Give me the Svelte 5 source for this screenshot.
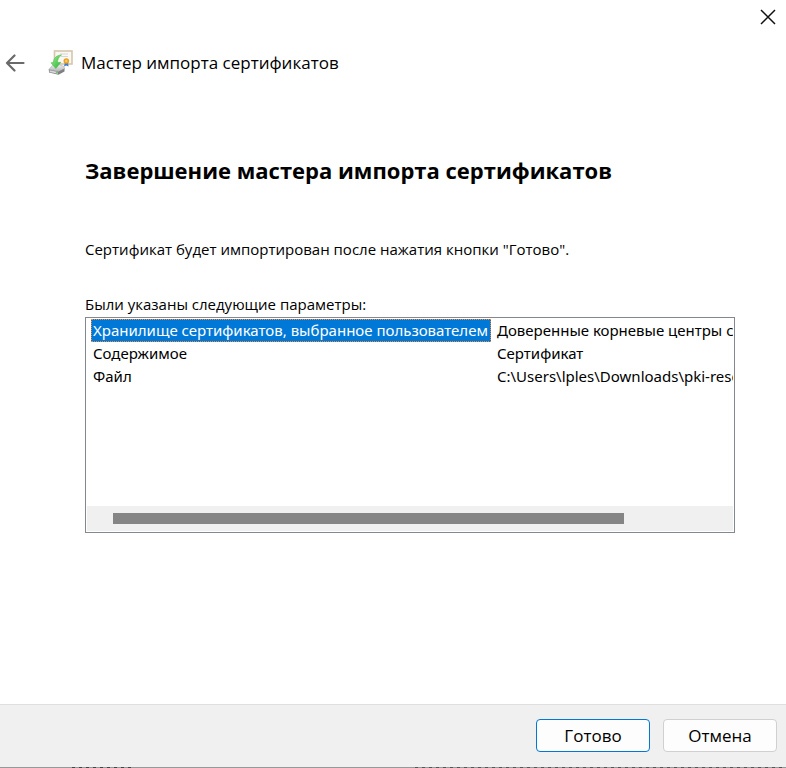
<script>
  const rows = [
    ['Хранилище сертификатов, выбранное пользователем', 'Доверенные корневые центры сертификации'],
    ['Содержимое', 'Сертификат'],
    ['Файл', 'C:\\Users\\lples\\Downloads\\pki-resources.cer'],
  ];
  let selected = $state(0);
</script>

<div class="wizard">
  <div class="titlebar">
    <button class="close" aria-label="Закрыть">
      <svg width="16" height="16" viewBox="0 0 16 16"><path d="M1 1L15 15M15 1L1 15" stroke="#111" stroke-width="1.5" fill="none" /></svg>
    </button>
  </div>

  <header>
    <button class="back" aria-label="Назад">
      <svg width="20" height="18" viewBox="0 0 20 18"><path d="M18.500 9H2M9.500 1.500L2 9L9.500 16.500" stroke="#6a6a6a" stroke-width="2.200" fill="none" stroke-linecap="round" stroke-linejoin="round" /></svg>
    </button>
    <svg class="logo" width="26" height="26" viewBox="0 0 26 26" aria-hidden="true">
      <defs>
        <linearGradient id="arrow" x1="0" y1="0" x2="1" y2="1"><stop offset="0" stop-color="#a2ee96" /><stop offset="1" stop-color="#22b52d" /></linearGradient>
        <linearGradient id="drive" x1="0" y1="0" x2="0" y2="1"><stop offset="0" stop-color="#f0f0f0" /><stop offset="1" stop-color="#b4b4b8" /></linearGradient>
      </defs>
      <rect x="6.500" y="1" width="17.500" height="13" fill="#faf8f3" stroke="#d5c6ad" stroke-width="1.600" />
      <path d="M12 4h8M13 6.500h7" stroke="#d4d6dc" stroke-width="1" />
      <path d="M17 12l-1 4.500 2.300-1 2.200 1-.5-4.500z" fill="#3d7ccb" />
      <circle cx="18.300" cy="11" r="2.800" fill="#eda020" />
      <circle cx="18.300" cy="11" r="1.200" fill="#ffcd60" />
      <path d="M.8 19.500L4.500 15.500 11 14.500l5 2 .5 2.500-5 2.500z" fill="url(#drive)" stroke="#aaa" stroke-width=".6" />
      <path d="M.8 19.500l9.700 2 6-3v3l-6 3.300L1 22.500z" fill="#808083" />
      <path d="M1.600 20.300l8.400 1.700v1.800L1.600 22z" fill="#d9d9dc" />
      <path d="M13.500 5C8.500 5.300 5.500 8 5.500 12.500L3 12.800 7.800 18.500l5-6.200-3.300.2C9.500 9.500 10.500 7 13.500 5z" fill="url(#arrow)" stroke="#4dba4b" stroke-width=".6" />
      <circle cx="9" cy="22.500" r=".8" fill="#41c83c" />
    </svg>
    <span class="name">Мастер импорта сертификатов</span>
  </header>

  <main>
    <h1>Завершение мастера импорта сертификатов</h1>
    <p>Сертификат будет импортирован после нажатия кнопки "Готово".</p>
    <p class="label" id="params">Были указаны следующие параметры:</p>
    <div class="list">
      <div class="view">
        <table aria-labelledby="params">
          <tbody>
            {#each rows as [name, value], i}
              <tr onclick={() => (selected = i)}>
                <td class="key" class:selected={selected === i}>{name}</td>
                <td class="value">{value}</td>
              </tr>
            {/each}
          </tbody>
        </table>
      </div>
      <div class="track"><div class="thumb"></div></div>
    </div>
  </main>

  <footer>
    <button class="action primary">Готово</button>
    <button class="action">Отмена</button>
  </footer>
  <div class="edge"></div>
</div>

<style>
  :global(body) { margin: 0; }
  .wizard {
    box-sizing: border-box;
    min-height: 100vh;
    display: flex;
    flex-direction: column;
    background: #fff;
    color: #000;
    font: 15px/23px "Open Sans", "Noto Sans", sans-serif;
  }
  button { padding: 0; border: 0; background: none; font: inherit; color: inherit; }
  svg { display: block; }
  .titlebar { display: flex; justify-content: flex-end; height: 33px; }
  .close { width: 36px; height: 33px; display: grid; place-items: center; }
  header { display: flex; align-items: center; height: 60px; padding-left: 5px; }
  .logo { margin-left: 23px; }
  .name { margin-left: 7px; font-size: 17px; line-height: 24px; }
  main { flex: 1; padding: 61px 51px 0 85px; }
  h1 { margin: 0; font-size: 22px; line-height: 32px; font-weight: bold; }
  p { margin: 52px 0 0; white-space: nowrap; }
  p.label { margin-top: 32px; }
  .list {
    box-sizing: border-box;
    height: 216px;
    margin-top: 1px;
    border: 1px solid #828790;
    padding: 1px;
    display: flex;
    flex-direction: column;
    font-family: "Noto Sans", "Open Sans", sans-serif;
  }
  .view { flex: 1; min-height: 0; overflow: hidden; }
  table { border-collapse: collapse; margin-left: 4px; table-layout: fixed; width: 804px; }
  td { box-sizing: border-box; height: 23px; padding: 0; line-height: 23px; white-space: nowrap; }
  .key { width: 400px; padding-left: 2px; }
  .value { padding-left: 6px; }
  .selected { background: #0078d7; color: #fff; outline: 1px dotted #ff8728; outline-offset: -1px; }
  .track { height: 25px; background: #f0f0f0; display: flex; align-items: center; padding: 0 26px; }
  .thumb { width: 86%; height: 11px; background: #858585; }
  footer {
    display: flex;
    justify-content: flex-end;
    gap: 13px;
    padding: 14px 9px 15px;
    background: #f0f0f0;
    border-top: 1px solid #dfdfdf;
  }
  .action {
    box-sizing: border-box;
    width: 114px;
    height: 33px;
    border: 1px solid #d0d0d0;
    border-radius: 4px;
    background: #fdfdfd;
    font-size: 17px;
    line-height: 24px;
  }
  .primary { border-color: #0078d4; }
  .edge {
    height: 1px;
    background:
      repeating-linear-gradient(90deg, #444 0 3px, transparent 3px 7px) 72px 0 / 60px 1px no-repeat,
      repeating-linear-gradient(90deg, #555 0 3px, transparent 3px 7px) 415px 0 / 371px 1px no-repeat,
      #989898;
  }
</style>
